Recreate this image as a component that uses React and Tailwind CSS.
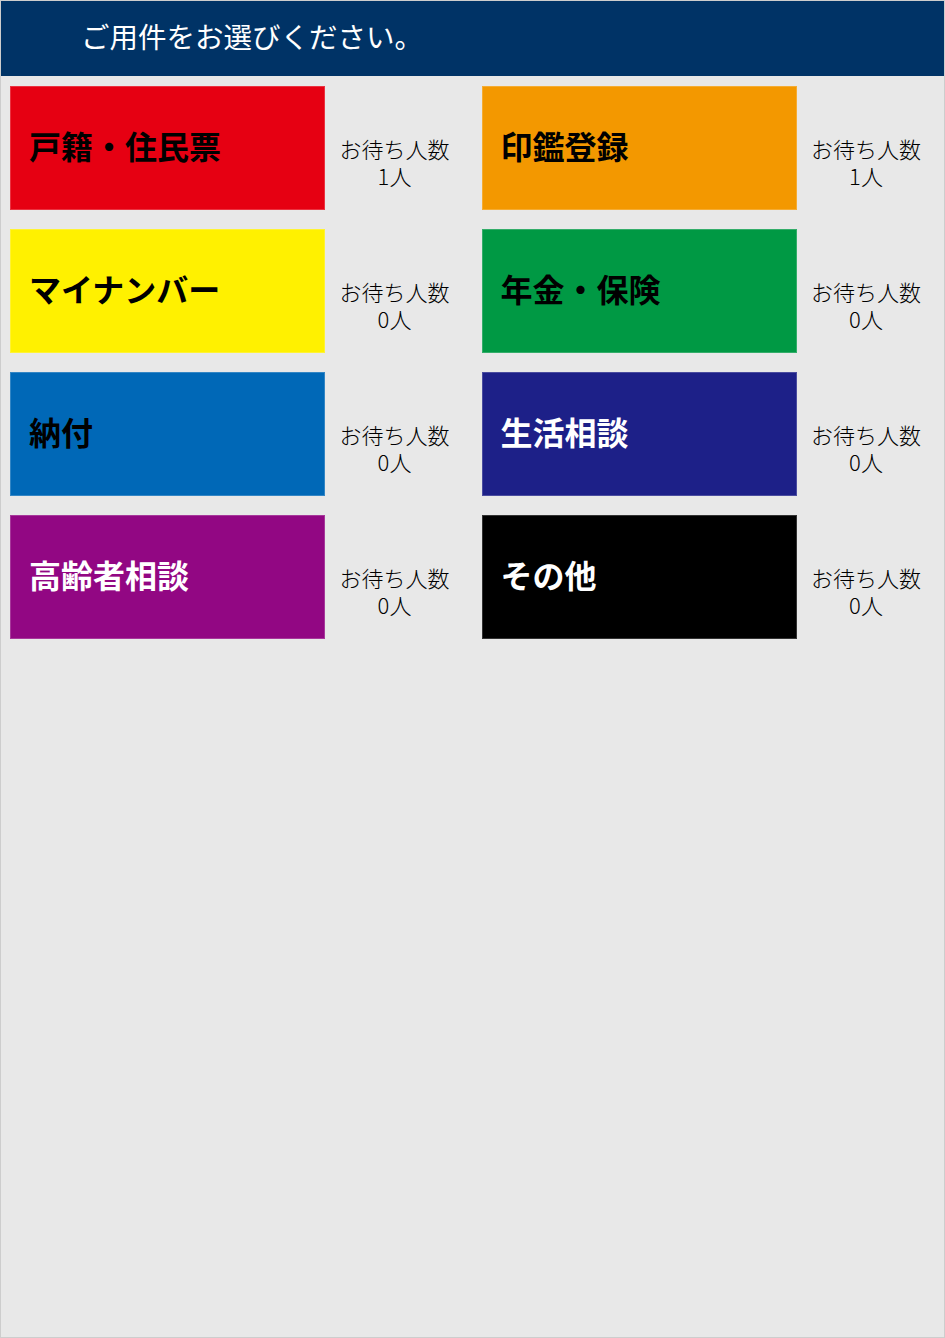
import React from "react";

const items = [
  { label: "戸籍・住民票", bg: "bg-[#e60012]", text: "text-black", count: 1 },
  { label: "印鑑登録", bg: "bg-[#f39800]", text: "text-black", count: 1 },
  { label: "マイナンバー", bg: "bg-[#fff100]", text: "text-black", count: 0 },
  { label: "年金・保険", bg: "bg-[#009944]", text: "text-black", count: 0 },
  { label: "納付", bg: "bg-[#0068b7]", text: "text-black", count: 0 },
  { label: "生活相談", bg: "bg-[#1d2088]", text: "text-white", count: 0 },
  { label: "高齢者相談", bg: "bg-[#920783]", text: "text-white", count: 0 },
  { label: "その他", bg: "bg-[#000000]", text: "text-white", count: 0 },
];

export default function App() {
  return (
    <div
      className="h-[1338px] w-[945px] border border-[#cdcdcd] bg-[#e8e8e8] overflow-hidden"
      style={{ fontFamily: '"Noto Sans CJK JP", "Noto Sans", sans-serif' }}
    >
      <div className="h-[75px] bg-[#003366] flex items-center pl-[80px] pb-[5px]">
        <span className="text-white text-[28.5px] leading-none">ご用件をお選びください。</span>
      </div>
      <div className="grid grid-cols-2 gap-y-[19px] mt-[10px]">
        {items.map((it) => (
          <div key={it.label} className="flex pl-[9px]">
            <div
              className={`w-[315px] h-[124px] ${it.bg} border border-white/20 flex items-center pl-[18px] pb-[6px]`}
            >
              <span className={`${it.text} text-[32px] font-bold leading-none`}>
                {it.label}
              </span>
            </div>
            <div className="w-[139px] pt-[49px] text-center text-black text-[22px] leading-[27px] font-light">
              <div>お待ち人数</div>
              <div>{it.count}人</div>
            </div>
          </div>
        ))}
      </div>
    </div>
  );
}
